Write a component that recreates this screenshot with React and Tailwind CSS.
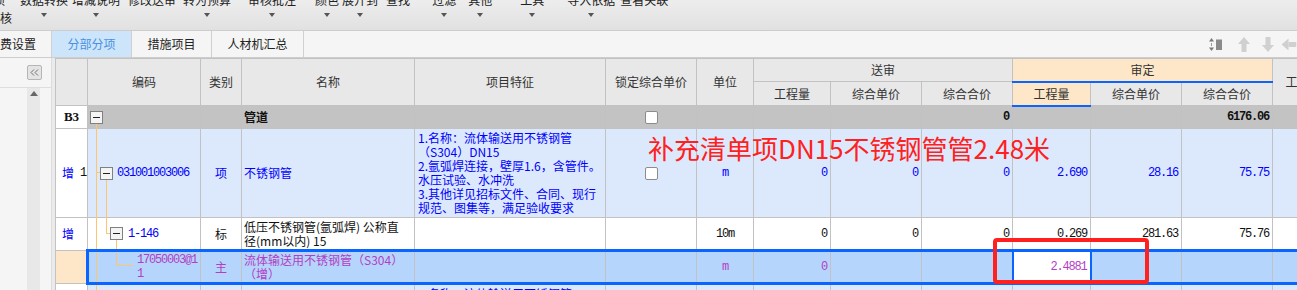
import React from "react";

const LINE = "border border-[#c2c2c2] p-0 align-middle";
const HEAD = "border border-[#c2c2c2] bg-[#e8e8e8] p-0 font-normal text-[#333] align-middle text-center whitespace-nowrap";
const NUM = "text-right pr-[3px] font-['Liberation_Mono',monospace] text-[12px] tracking-[-1.2px] whitespace-nowrap";
const MONO = "font-['Liberation_Mono',monospace] text-[12px] tracking-[-1.2px] whitespace-nowrap";
const BLUE = "text-[#0000ff]";
const PURPLE = "text-[#b23ec4]";
const TREE = "absolute w-px bg-[#ffc46e]";

const TOOLS = [
  { label: "数据转换", gap: "ml-[8px]", arrow: true },
  { label: "增减说明", gap: "ml-[4px]", arrow: true },
  { label: "修改送审", gap: "ml-[8px]", arrow: false },
  { label: "转为预算", gap: "ml-[7px]", arrow: true },
  { label: "审核批注", gap: "ml-[17px]", arrow: true },
  { label: "颜色", gap: "ml-[19px]", arrow: true },
  { label: "展开到", gap: "ml-[3px]", arrow: true },
  { label: "查找", gap: "ml-[8px]", arrow: false },
  { label: "过滤", gap: "ml-[22px]", arrow: true },
  { label: "其他", gap: "ml-[12px]", arrow: true },
  { label: "工具", gap: "ml-[28px]", arrow: true },
  { label: "导入依据", gap: "ml-[23px]", arrow: true },
  { label: "查看关联", gap: "ml-[5px]", arrow: false },
];

const FEATURES = [
  "1.名称：流体输送用不锈钢管",
  "（S304）DN15",
  "2.氩弧焊连接，壁厚1.6，含管件。",
  "水压试验、水冲洗",
  "3.其他详见招标文件、合同、现行",
  "规范、图集等，满足验收要求",
];

function TreeBox() {
  return (
    <span className="relative z-10 flex h-[13px] w-[13px] shrink-0 items-center justify-center border border-[#808080] bg-[#f4f4f4]">
      <span className="h-px w-[7px] bg-[#222]" />
    </span>
  );
}

function CheckBox() {
  return <span className="inline-block h-[13px] w-[13px] rounded-[2px] border border-[#8c8c8c] bg-white align-middle" />;
}

function Arrow({ dir }) {
  const rot = { up: "", down: "rotate-180", left: "-rotate-90" }[dir];
  return (
    <svg viewBox="0 0 12 15" className={`h-[15px] w-[12px] ${rot}`}>
      <polygon points="6,0 12,7 0,7" fill="#d0d0d0" />
      <rect x="3.5" y="7" width="5" height="8" fill="#d0d0d0" />
    </svg>
  );
}

function Toolbar() {
  return (
    <div className="h-[31px] overflow-hidden border-b border-[#cdcdcd] bg-gradient-to-b from-[#ededed] to-[#e1e1e1]">
      <div className="mt-[-9px] flex items-start text-[12px] leading-[18px] text-[#222]">
        <div className="flex w-[12px] flex-col whitespace-nowrap">
          <span className="ml-[-7px]">项</span>
          <span>核</span>
        </div>
        {TOOLS.map((t) => (
          <div key={t.label} className={`flex flex-col items-center whitespace-nowrap ${t.gap}`}>
            <span>{t.label}</span>
            {t.arrow && <span className="mt-[4px] h-0 w-0 border-x-[3px] border-t-[4px] border-x-transparent border-t-[#555]" />}
          </div>
        ))}
      </div>
    </div>
  );
}

function TabBar() {
  return (
    <div className="flex h-[27px] items-stretch border-b border-[#cdcdcd] bg-[#f5f5f5] text-[12px] text-[#222]">
      <div className="ml-[-27px] flex w-[79px] items-center justify-center border-r border-[#d0d0d0]">取费设置</div>
      <div className="flex w-[80px] items-center justify-center border-r border-[#d0d0d0] bg-[#cce5fb] text-[#4a90e2]">分部分项</div>
      <div className="flex w-[80px] items-center justify-center border-r border-[#d0d0d0]">措施项目</div>
      <div className="flex w-[92px] items-center justify-center border-r border-[#d0d0d0]">人材机汇总</div>
      <div className="ml-auto mr-[-1px] flex items-center">
        <svg viewBox="0 0 13 13" className="h-[13px] w-[13px]">
          <polygon points="2.5,0 5,3.5 0,3.5" fill="#7a7a7a" />
          <polygon points="0,9.5 5,9.5 2.5,13" fill="#7a7a7a" />
          <rect x="2" y="5" width="1" height="3" fill="#9a9a9a" />
          <rect x="7" y="1.5" width="6" height="10.5" fill="#8a8a8a" />
        </svg>
        <span className="ml-[16px] flex"><Arrow dir="up" /></span>
        <span className="ml-[12px] flex"><Arrow dir="down" /></span>
        <span className="ml-[9px] flex w-[15px]"><Arrow dir="left" /></span>
      </div>
    </div>
  );
}

function LeftPanel() {
  return (
    <div className="flex w-[52px] shrink-0 flex-col border-r border-[#dcdcdc] bg-[#f5f5f5]">
      <div className="h-[30px] border-b border-[#dddddd] pt-[7px]">
        <div className="ml-[27px] flex h-[15px] w-[15px] items-center justify-center rounded-[2px] border border-[#b5b5b5] bg-[#e4e4e4]">
          <svg viewBox="0 0 9 7" className="h-[7px] w-[9px]">
            <polyline points="4,0.5 1,3.5 4,6.5" fill="none" stroke="#707070" strokeWidth="1" />
            <polyline points="8,0.5 5,3.5 8,6.5" fill="none" stroke="#707070" strokeWidth="1" />
          </svg>
        </div>
      </div>
      <div className="flex flex-1">
        <div className="ml-[27px] flex w-[13px] justify-center bg-[#e8e8e8] pt-[3px]">
          <span className="h-0 w-0 border-x-[4px] border-b-[5px] border-x-transparent border-b-[#666]" />
        </div>
      </div>
    </div>
  );
}

function Features({ className = "" }) {
  return (
    <div className={`pl-[3px] text-[12px] leading-[14px] whitespace-nowrap ${className}`}>
      {FEATURES.map((l) => (
        <div key={l}>{l}</div>
      ))}
    </div>
  );
}

function Grid() {
  return (
    <table className="w-[1279px] table-fixed border-collapse text-[12px] text-[#111]">
      <colgroup>
        <col className="w-[32px]" />
        <col className="w-[113px]" />
        <col className="w-[41px]" />
        <col className="w-[173px]" />
        <col className="w-[191px]" />
        <col className="w-[91px]" />
        <col className="w-[57px]" />
        <col className="w-[77px]" />
        <col className="w-[91px]" />
        <col className="w-[91px]" />
        <col className="w-[78px]" />
        <col className="w-[91px]" />
        <col className="w-[91px]" />
        <col className="w-[62px]" />
      </colgroup>
      <thead>
        <tr className="h-[23px]">
          <th rowSpan={2} className={HEAD} />
          <th rowSpan={2} className={HEAD}>编码</th>
          <th rowSpan={2} className={HEAD}>类别</th>
          <th rowSpan={2} className={HEAD}>名称</th>
          <th rowSpan={2} className={HEAD}>项目特征</th>
          <th rowSpan={2} className={HEAD}>锁定综合单价</th>
          <th rowSpan={2} className={HEAD}>单位</th>
          <th colSpan={3} className={HEAD}>送审</th>
          <th colSpan={3} className={`${HEAD} border-b-2 border-b-[#0a64ff] !bg-[#fde7c8] font-bold text-[#222]`}>审定</th>
          <th rowSpan={2} className={HEAD}>工程量</th>
        </tr>
        <tr className="h-[24px]">
          <th className={HEAD}>工程量</th>
          <th className={HEAD}>综合单价</th>
          <th className={HEAD}>综合合价</th>
          <th className={`${HEAD} border-b-2 border-b-[#0a64ff] !bg-[#fde7c8] font-bold text-[#222]`}>工程量</th>
          <th className={HEAD}>综合单价</th>
          <th className={HEAD}>综合合价</th>
        </tr>
      </thead>
      <tbody>
        {/* B3 分部 */}
        <tr className="h-[23px] bg-[#c3c3c3]">
          <td className={`${LINE} bg-white text-center font-['Liberation_Serif',serif] text-[13px] font-bold`}>B3</td>
          <td className={`${LINE} relative`}>
            <div className="flex items-center pl-[2px]"><TreeBox /></div>
            <span className={`${TREE} left-[8px] top-[17px] -bottom-px`} />
          </td>
          <td className={LINE} />
          <td className={`${LINE} pl-[2px] font-bold`}>管道</td>
          <td className={LINE} />
          <td className={`${LINE} text-center leading-none`}><CheckBox /></td>
          <td className={LINE} />
          <td className={LINE} />
          <td className={LINE} />
          <td className={`${LINE} ${NUM} font-bold`}>0</td>
          <td className={LINE} />
          <td className={LINE} />
          <td className={`${LINE} ${NUM} font-bold`}>6176.06</td>
          <td className={LINE} />
        </tr>

        {/* 清单项 */}
        <tr className="h-[89px] bg-[#dce9fc]">
          <td className={`${LINE} bg-white`}>
            <div className="flex items-center pl-[6px]">
              <span className={BLUE}>增</span>
              <span className={`${MONO} ml-[6px]`}>1</span>
            </div>
          </td>
          <td className={`${LINE} relative`}>
            <span className={`${TREE} left-[8px] -top-px -bottom-px`} />
            <span className="absolute left-[8px] top-[43px] h-px w-[4px] bg-[#ffc46e]" />
            <span className={`${TREE} left-[18px] top-[50px] -bottom-px`} />
            <div className="flex items-center pl-[12px]">
              <TreeBox />
              <span className={`${MONO} ${BLUE} ml-[4px]`}>031001003006</span>
            </div>
          </td>
          <td className={`${LINE} text-center ${BLUE}`}>项</td>
          <td className={`${LINE} pl-[2px] ${BLUE}`}>不锈钢管</td>
          <td className={`${LINE} ${BLUE}`}><Features /></td>
          <td className={`${LINE} text-center leading-none`}><CheckBox /></td>
          <td className={`${LINE} text-center ${MONO} ${BLUE}`}>m</td>
          <td className={`${LINE} ${NUM} ${BLUE}`}>0</td>
          <td className={`${LINE} ${NUM} ${BLUE}`}>0</td>
          <td className={`${LINE} ${NUM} ${BLUE}`}>0</td>
          <td className={`${LINE} ${NUM} ${BLUE}`}>2.690</td>
          <td className={`${LINE} ${NUM} ${BLUE}`}>28.16</td>
          <td className={`${LINE} ${NUM} ${BLUE}`}>75.75</td>
          <td className={LINE} />
        </tr>

        {/* 定额 */}
        <tr className="h-[33px] bg-white">
          <td className={LINE}>
            <div className={`pl-[6px] ${BLUE}`}>增</div>
          </td>
          <td className={`${LINE} relative`}>
            <span className={`${TREE} left-[8px] -top-px bottom-0`} />
            <span className={`${TREE} left-[18px] -top-px h-[16px]`} />
            <span className="absolute left-[18px] top-[15px] h-px w-[4px] bg-[#ffc46e]" />
            <span className={`${TREE} left-[28px] top-[22px] bottom-0`} />
            <div className="flex items-center pl-[22px]">
              <TreeBox />
              <span className={`${MONO} ${BLUE} ml-[5px]`}>1-146</span>
            </div>
          </td>
          <td className={`${LINE} text-center`}>标</td>
          <td className={`${LINE} pl-[2px] leading-[14px] whitespace-nowrap`}>
            低压不锈钢管(氩弧焊) 公称直
            <br />
            径(mm以内) 15
          </td>
          <td className={LINE} />
          <td className={LINE} />
          <td className={`${LINE} text-center ${MONO}`}>10m</td>
          <td className={`${LINE} ${NUM}`}>0</td>
          <td className={`${LINE} ${NUM}`}>0</td>
          <td className={`${LINE} ${NUM}`}>0</td>
          <td className={`${LINE} ${NUM}`}>0.269</td>
          <td className={`${LINE} ${NUM}`}>281.63</td>
          <td className={`${LINE} ${NUM}`}>75.76</td>
          <td className={LINE} />
        </tr>

        {/* 主材 (选中) */}
        <tr className="h-[33px] bg-[#b5d5fc]">
          <td className={`${LINE} bg-[#fde7c8]`} />
          <td className={`${LINE} relative border-y-[3px] border-l-[3px] border-y-[#0a64ff] border-l-[#0a64ff]`}>
            <span className={`${TREE} left-[7px] top-0 bottom-0`} />
            <span className={`${TREE} left-[27px] top-0 h-[13px]`} />
            <span className="absolute left-[27px] top-[13px] h-px w-[17px] bg-[#ffc46e]" />
            <div className={`pl-[48px] leading-[14px] ${MONO} ${PURPLE}`}>
              17050003@1
              <br />
              1
            </div>
          </td>
          <td className={`${LINE} border-y-[3px] border-y-[#0a64ff] text-center ${PURPLE}`}>主</td>
          <td className={`${LINE} border-y-[3px] border-y-[#0a64ff] pl-[2px] leading-[14px] whitespace-nowrap ${PURPLE}`}>
            流体输送用不锈钢管（S304）
            <br />
            （增）
          </td>
          <td className={`${LINE} border-y-[3px] border-y-[#0a64ff]`} />
          <td className={`${LINE} border-y-[3px] border-y-[#0a64ff]`} />
          <td className={`${LINE} border-y-[3px] border-y-[#0a64ff] text-center ${MONO} ${PURPLE}`}>m</td>
          <td className={`${LINE} border-y-[3px] border-y-[#0a64ff] ${NUM} ${PURPLE}`}>0</td>
          <td className={`${LINE} border-y-[3px] border-y-[#0a64ff]`} />
          <td className={`${LINE} border-y-[3px] border-y-[#0a64ff]`} />
          <td className={`${LINE} border-y-[3px] border-x-2 border-y-[#0a64ff] border-x-[#0a64ff] bg-white ${NUM} ${PURPLE}`}>2.4881</td>
          <td className={`${LINE} border-y-[3px] border-y-[#0a64ff]`} />
          <td className={`${LINE} border-y-[3px] border-y-[#0a64ff]`} />
          <td className={`${LINE} border-y-[3px] border-y-[#0a64ff]`} />
        </tr>

        {/* 下一清单项 */}
        <tr className="h-[89px] bg-[#dce9fc]">
          <td className={`${LINE} bg-white`} />
          <td className={`${LINE} relative`}>
            <span className={`${TREE} left-[8px] top-0 -bottom-px`} />
          </td>
          <td className={LINE} />
          <td className={LINE} />
          <td className={`${LINE} ${BLUE}`}><Features /></td>
          <td className={LINE} />
          <td className={LINE} />
          <td className={LINE} />
          <td className={LINE} />
          <td className={LINE} />
          <td className={LINE} />
          <td className={LINE} />
          <td className={LINE} />
          <td className={LINE} />
        </tr>
      </tbody>
    </table>
  );
}

export default function App() {
  return (
    <div className="relative h-[290px] w-[1297px] overflow-hidden bg-white font-['Noto_Sans_CJK_SC','Noto_Sans',sans-serif] text-[12px]">
      <Toolbar />
      <TabBar />
      <div className="flex h-[232px]">
        <LeftPanel />
        <div className="w-[3px] shrink-0 bg-[#ebebeb]" />
        <div className="flex-1 overflow-hidden">
          <Grid />
        </div>
      </div>

      {/* 批注 */}
      <div className="pointer-events-none absolute left-[648px] top-[135px] whitespace-nowrap text-[26px] leading-none text-[#ff2020]">
        补充清单项DN15不锈钢管管2.48米
      </div>
      <div className="pointer-events-none absolute left-[993px] top-[238px] h-[46px] w-[156px] rounded-[4px] border-4 border-[#ff2020]" />
    </div>
  );
}
